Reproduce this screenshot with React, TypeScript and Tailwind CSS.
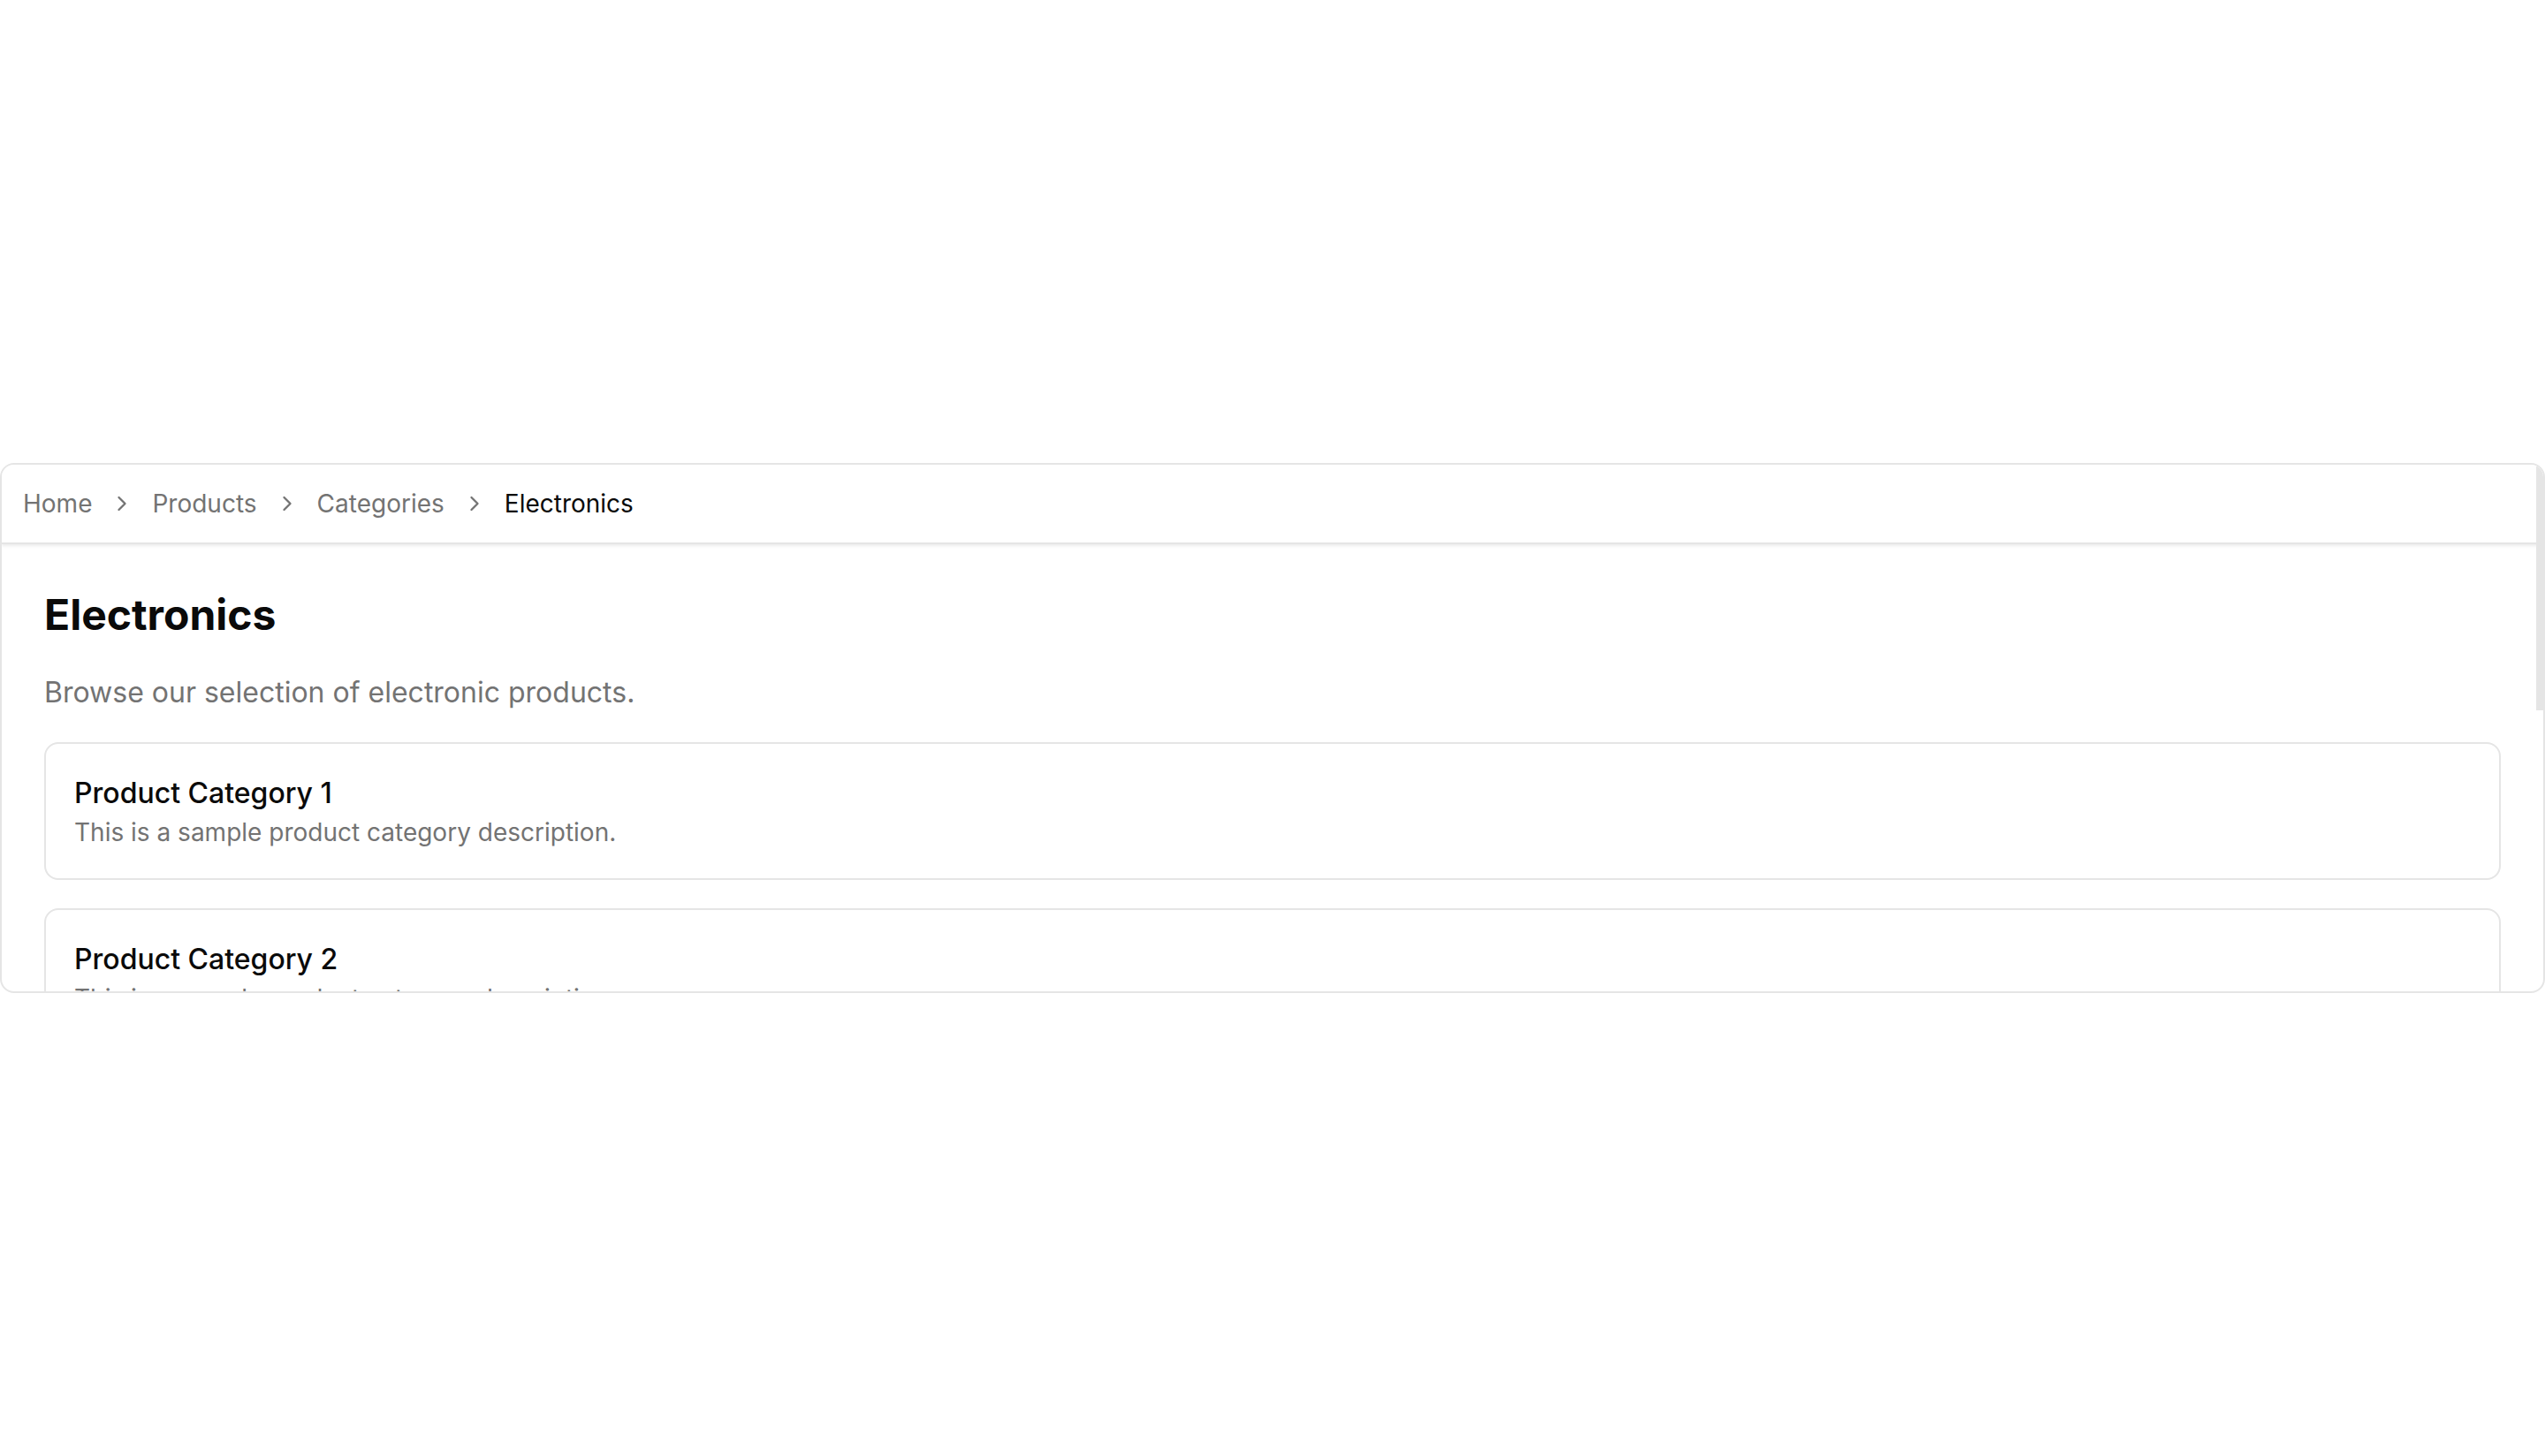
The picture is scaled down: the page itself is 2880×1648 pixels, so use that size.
import { ChevronRight } from 'lucide-react';

const crumbs = ['Home', 'Products', 'Categories'];

const categories = [1, 2, 3, 4, 5].map((n) => ({
  title: `Product Category ${n}`,
  description: 'This is a sample product category description.',
}));

export default function App() {
  return (
    <div
      className="h-screen w-full flex items-center bg-white"
      style={{ fontFamily: 'Inter, "Noto Sans", sans-serif' }}
    >
      <div className="relative w-full h-[600px] rounded-2xl border-2 border-[#e5e5e5] bg-white overflow-hidden">
        <div className="h-full overflow-hidden">
          <nav className="px-6 py-6 border-b-2 border-[#e5e5e5] bg-white shadow-[0_2px_3px_rgba(0,0,0,0.08)]">
            <ol className="flex items-center gap-5 text-[28px] leading-[40px] text-[#737373]">
              {crumbs.map((c) => (
                <li key={c} className="flex items-center gap-5">
                  <span>{c}</span>
                  <ChevronRight className="w-7 h-7" />
                </li>
              ))}
              <li className="text-[#0a0a0a]">Electronics</li>
            </ol>
          </nav>

          <div className="p-12 flex flex-col gap-8">
            <h1 className="text-[48px] leading-[64px] font-bold text-[#0a0a0a]">Electronics</h1>
            <p className="text-[32px] leading-[48px] text-[#737373]">
              Browse our selection of electronic products.
            </p>
            {categories.map((cat) => (
              <div key={cat.title} className="rounded-2xl border-2 border-[#e5e5e5] p-8">
                <h2 className="text-[32px] leading-[48px] font-medium text-[#0a0a0a]">{cat.title}</h2>
                <p className="text-[28px] leading-[40px] text-[#737373]">{cat.description}</p>
              </div>
            ))}
          </div>
        </div>

        {/* scroll thumb */}
        <div className="absolute -right-[2px] top-[2px] w-[10px] h-[276px] bg-[#e5e5e5]" />
      </div>
    </div>
  );
}
